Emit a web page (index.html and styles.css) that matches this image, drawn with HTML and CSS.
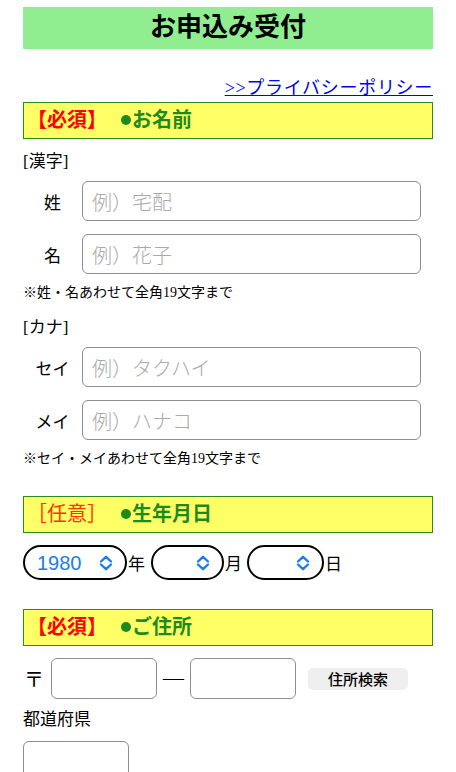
FILE: index.html
```html
<!DOCTYPE html>
<html lang="ja">
<head>
    <meta charset="UTF-8">
    <meta name="viewport" content="width=device-width, initial-scale=1.0">
    <title>お申込み受付</title>
    <link rel="stylesheet" href="styles.css">
</head>
<body>
    <div class="container">
        <h1 class="title">お申込み受付</h1>
        <div class="policy"><a href="#">&gt;&gt;プライバシーポリシー</a></div>

        <h2 class="section"><span class="req">【必須】</span><span class="dot"></span>お名前</h2>
        <p class="sub">[漢字]</p>
        <div class="name-row first">
            <label>姓</label>
            <input type="text" placeholder="例）宅配">
        </div>
        <div class="name-row">
            <label>名</label>
            <input type="text" placeholder="例）花子">
        </div>
        <p class="note">※姓・名あわせて全角19文字まで</p>
        <p class="sub kana">[カナ]</p>
        <div class="name-row first">
            <label>セイ</label>
            <input type="text" placeholder="例）タクハイ">
        </div>
        <div class="name-row">
            <label>メイ</label>
            <input type="text" placeholder="例）ハナコ">
        </div>
        <p class="note">※セイ・メイあわせて全角19文字まで</p>

        <h2 class="section birth"><span class="opt">［任意］</span><span class="dot"></span>生年月日</h2>
        <div class="birth-row">
            <div class="select year">
                <select><option>1980</option></select>
                <svg class="chev" viewBox="0 0 14 16" width="14" height="16"><path d="M2 6.5 L7 1.8 L12 6.5 M2 9.5 L7 14.2 L12 9.5" fill="none" stroke="#1a7cf5" stroke-width="2.4" stroke-linecap="round" stroke-linejoin="round"/></svg>
            </div>
            <span class="unit">年</span>
            <div class="select month">
                <select><option></option></select>
                <svg class="chev" viewBox="0 0 14 16" width="14" height="16"><path d="M2 6.5 L7 1.8 L12 6.5 M2 9.5 L7 14.2 L12 9.5" fill="none" stroke="#1a7cf5" stroke-width="2.4" stroke-linecap="round" stroke-linejoin="round"/></svg>
            </div>
            <span class="unit">月</span>
            <div class="select day">
                <select><option></option></select>
                <svg class="chev" viewBox="0 0 14 16" width="14" height="16"><path d="M2 6.5 L7 1.8 L12 6.5 M2 9.5 L7 14.2 L12 9.5" fill="none" stroke="#1a7cf5" stroke-width="2.4" stroke-linecap="round" stroke-linejoin="round"/></svg>
            </div>
            <span class="unit">日</span>
        </div>

        <h2 class="section addr"><span class="req">【必須】</span><span class="dot"></span>ご住所</h2>
        <div class="zip-row">
            <span class="zip-mark">〒</span>
            <input type="text" class="zip">
            <span class="dash">—</span>
            <input type="text" class="zip">
            <button type="button">住所検索</button>
        </div>
        <p class="sub pref">都道府県</p>
        <input type="text" class="pref-input">
    </div>
</body>
</html>
```

FILE: styles.css
```css
body {
    margin: 0;
    padding: 7px 23px 0;
    font-family: "Liberation Serif", "Noto Sans CJK JP", serif;
    color: #000;
    background: #fff;
}
.container {
    width: 410px;
}
.title {
    margin: 0;
    height: 42px;
    line-height: 42px;
    background-color: #90ee90;
    text-align: center;
    font-size: 26px;
    font-weight: 700;
}
.policy {
    margin-top: 28px;
    height: 22px;
    line-height: 22px;
    text-align: right;
    font-size: 18px;
    letter-spacing: 0.7px;
}
.policy a {
    color: #0000ee;
}
.section {
    margin: 3px 0 0;
    height: 35px;
    line-height: 35px;
    padding-left: 3px;
    background-color: #ffff66;
    border: 1px solid #2f8a1e;
    color: #1e8a1e;
    font-size: 20px;
    font-weight: 700;
}
.req {
    color: #ff0000;
}
.opt {
    color: #ff3300;
    font-weight: 400;
}
.dot {
    display: inline-block;
    width: 10px;
    height: 10px;
    margin: 0 1px 0 14px;
    border-radius: 50%;
    background-color: #1e8a1e;
    vertical-align: 2px;
}
.sub {
    margin: 11px 0 0;
    height: 24px;
    line-height: 24px;
    font-size: 17px;
}
.sub.kana {
    margin-top: 13px;
}
.name-row {
    display: flex;
    align-items: center;
    margin-top: 13px;
}
.name-row.first {
    margin-top: 7px;
}
.name-row label {
    width: 59px;
    text-align: center;
    font-size: 17px;
}
.name-row input {
    box-sizing: border-box;
    width: 339px;
    height: 40px;
    padding: 0 9px;
    border: 1px solid #8e8e8e;
    border-radius: 6px;
    font-family: "Noto Sans CJK JP", sans-serif;
    font-size: 20px;
    font-weight: 300;
}
.name-row input::placeholder {
    color: #a9a9a9;
}
.note {
    margin: 9px 0 0;
    height: 20px;
    line-height: 20px;
    font-size: 14px;
}
.section.birth {
    margin-top: 27px;
}
.birth-row {
    display: flex;
    align-items: center;
    margin-top: 12px;
    height: 35px;
}
.select {
    position: relative;
    height: 35px;
}
.select select {
    appearance: none;
    -webkit-appearance: none;
    box-sizing: border-box;
    height: 35px;
    width: 100%;
    padding: 0 0 0 12px;
    border: 2px solid #000;
    border-radius: 18px;
    background: #fff;
    color: #1a7cf5;
    font-family: "Liberation Sans", Arial, sans-serif;
    font-size: 20px;
}
.select .chev {
    position: absolute;
    right: 14px;
    top: 10px;
    pointer-events: none;
}
.year {
    width: 104px;
}
.month {
    width: 73px;
    margin-left: 6px;
}
.day {
    width: 77px;
    margin-left: 5px;
}
.unit {
    margin-left: 1px;
    font-size: 17px;
}
.section.addr {
    margin-top: 29px;
}
.zip-row {
    display: flex;
    align-items: center;
    margin-top: 12px;
}
.zip-mark {
    width: 27px;
    padding-left: 1px;
    font-family: "Noto Sans CJK JP", sans-serif;
    font-size: 20px;
}
.zip,
.pref-input {
    box-sizing: border-box;
    width: 106px;
    height: 41px;
    border: 1px solid #8e8e8e;
    border-radius: 6px;
}
.dash {
    width: 33px;
    text-align: center;
    font-family: "Liberation Serif", serif;
    font-size: 21px;
}
.zip-row button {
    margin-left: 12px;
    width: 100px;
    height: 22px;
    padding: 0;
    border: none;
    border-radius: 5px;
    background-color: #efefef;
    font-family: "Noto Sans CJK JP", sans-serif;
    font-size: 15px;
    font-weight: 500;
    color: #000;
}
.sub.pref {
    margin-top: 9px;
}
.pref-input {
    display: block;
    margin-top: 9px;
    height: 40px;
}
```
